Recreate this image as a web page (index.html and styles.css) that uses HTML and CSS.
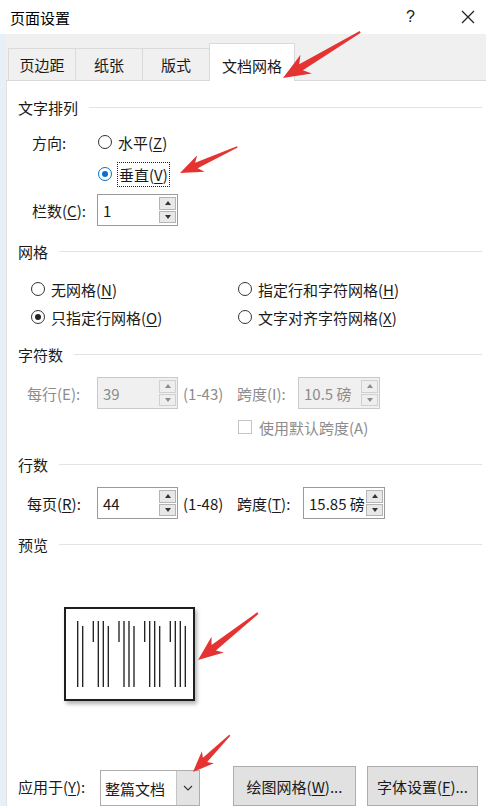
FILE: index.html
```html
<!DOCTYPE html>
<html lang="zh-CN">
<head>
  <meta charset="UTF-8" />
  <meta name="viewport" content="width=device-width, initial-scale=1.0"/>
  <title>页面设置</title>
  <link rel="stylesheet" href="styles.css">
</head>
<body>

  <div class="titlebar">
    <span class="title">页面设置</span>
    <span class="help">?</span>
    <svg class="close" width="14" height="14" viewBox="0 0 14 14">
      <path d="M1 1 L13 13 M13 1 L1 13" stroke="#222" stroke-width="1.3" fill="none"/>
    </svg>
  </div>

  <div class="window">
    <div class="edge"></div>
    <div class="dialog">

      <div class="tabs">
        <div class="tab">页边距</div>
        <div class="tab">纸张</div>
        <div class="tab">版式</div>
        <div class="tab active">文档网格</div>
      </div>

      <div class="panel">
        <div class="group-title"><span>文字排列</span></div>

        <div class="dir-row first">
          <span class="dir-label">方向:</span>
          <span class="radio"></span>
          <span>水平(<u>Z</u>)</span>
        </div>
        <div class="dir-row second">
          <span class="radio checked blue"></span>
          <span class="focus">垂直(<u>V</u>)</span>
        </div>

        <div class="cols-row">
          <span class="cols-label">栏数(<u>C</u>):</span>
          <div class="spin w81">
            <span class="spin-value">1</span>
            <div class="spin-btns">
              <span class="spin-btn up"></span>
              <span class="spin-btn down"></span>
            </div>
          </div>
        </div>

        <div class="group-title gap15"><span>网格</span></div>

        <div class="grid-row first">
          <div class="opt"><span class="radio"></span>无网格(<u>N</u>)</div>
          <div class="opt"><span class="radio"></span>指定行和字符网格(<u>H</u>)</div>
        </div>
        <div class="grid-row second">
          <div class="opt"><span class="radio checked"></span>只指定行网格(<u>O</u>)</div>
          <div class="opt"><span class="radio"></span>文字对齐字符网格(<u>X</u>)</div>
        </div>

        <div class="group-title gap15"><span>字符数</span></div>

        <div class="field-row disabled">
          <span class="field-label">每行(E):</span>
          <div class="spin w81">
            <span class="spin-value">39</span>
            <div class="spin-btns">
              <span class="spin-btn up"></span>
              <span class="spin-btn down"></span>
            </div>
          </div>
          <span class="range">(1-43)</span>
          <span class="pitch-label chars">跨度(I):</span>
          <div class="spin w82">
            <span class="spin-value">10.5 磅</span>
            <div class="spin-btns">
              <span class="spin-btn up"></span>
              <span class="spin-btn down"></span>
            </div>
          </div>
        </div>

        <div class="check-row">
          <span class="checkbox"></span>
          <span>使用默认跨度(A)</span>
        </div>

        <div class="group-title gap16"><span>行数</span></div>

        <div class="field-row">
          <span class="field-label">每页(<u>R</u>):</span>
          <div class="spin w81">
            <span class="spin-value">44</span>
            <div class="spin-btns">
              <span class="spin-btn up"></span>
              <span class="spin-btn down"></span>
            </div>
          </div>
          <span class="range">(1-48)</span>
          <span class="pitch-label lines">跨度(<u>T</u>):</span>
          <div class="spin w82">
            <span class="spin-value">15.85 磅</span>
            <div class="spin-btns">
              <span class="spin-btn up"></span>
              <span class="spin-btn down"></span>
            </div>
          </div>
        </div>

        <div class="group-title gap15"><span>预览</span></div>

        <div class="preview">
          <svg width="127" height="90" viewBox="0 0 127 90">
            <g stroke="#1a1a1a" stroke-width="1.3">
              <line x1="11.7" y1="12" x2="11.7" y2="78"/>
              <line x1="16.7" y1="17" x2="16.7" y2="78"/>

              <line x1="27.3" y1="12" x2="27.3" y2="33"/>
              <line x1="32.3" y1="12" x2="32.3" y2="78"/>
              <line x1="37.3" y1="12" x2="37.3" y2="78"/>
              <line x1="42.3" y1="17" x2="42.3" y2="78"/>

              <line x1="53" y1="12" x2="53" y2="33"/>
              <line x1="58" y1="12" x2="58" y2="78"/>
              <line x1="63" y1="12" x2="63" y2="78"/>
              <line x1="68" y1="17" x2="68" y2="78"/>

              <line x1="78.7" y1="12" x2="78.7" y2="33"/>
              <line x1="83.7" y1="12" x2="83.7" y2="78"/>
              <line x1="88.7" y1="12" x2="88.7" y2="78"/>
              <line x1="93.7" y1="17" x2="93.7" y2="78"/>

              <line x1="104.3" y1="12" x2="104.3" y2="33"/>
              <line x1="109.3" y1="12" x2="109.3" y2="78"/>
              <line x1="114.3" y1="12" x2="114.3" y2="78"/>
              <line x1="119.3" y1="17" x2="119.3" y2="78"/>
            </g>
          </svg>
        </div>

        <div class="bottom-row">
          <span class="apply-label">应用于(<u>Y</u>):</span>
          <div class="combo">
            <span class="combo-value">整篇文档</span>
            <span class="combo-drop">
              <svg width="10" height="6" viewBox="0 0 10 6">
                <path d="M1 1 L5 5 L9 1" stroke="#333" stroke-width="1.1" fill="none"/>
              </svg>
            </span>
          </div>
          <button class="btn draw">绘图网格(<u>W</u>)...</button>
          <button class="btn font">字体设置(<u>F</u>)...</button>
        </div>
      </div>
    </div>
  </div>

  <!-- red annotation arrows drawn over the dialog -->
  <svg class="marks" width="486" height="806" viewBox="0 0 486 806">
    <g fill="#e53331">
      <polygon transform="translate(283,78) rotate(-30.9)" points="0,0 27,-11 21,-3.5 90,-1 90,1 21,3.5 27,11"/>
      <polygon transform="translate(180,173) rotate(-24.5)" points="0,0 23,-9 18,-3 63,-0.8 63,0.8 18,3 23,9"/>
      <polygon transform="translate(198,660) rotate(-38.1)" points="0,0 25,-10 20,-3.5 76,-1 76,1 20,3.5 25,10"/>
      <polygon transform="translate(193,772) rotate(-45)" points="0,0 21,-8.5 17,-3 52,-0.8 52,0.8 17,3 21,8.5"/>
    </g>
  </svg>

</body>
</html>
```

FILE: styles.css
```css
body {
  font-family: "Noto Sans CJK SC", "Noto Sans", sans-serif;
  font-size: 15px;
  color: #1a1a1a;
  background: #fff;
  margin: 0;
  width: 486px;
  height: 806px;
  overflow: hidden;
  position: relative;
}

u {
  text-decoration-thickness: 1px;
  text-underline-offset: 2px;
}

.titlebar {
  height: 34px;
  display: flex;
  align-items: center;
  padding-left: 10px;
  background: #fff;
}

.title {
  font-size: 15px;
  color: #000;
  flex: 1;
}

.help {
  font-family: "Liberation Sans", sans-serif;
  font-size: 16px;
  margin-right: 46px;
}

.close {
  margin-right: 11px;
}

.window {
  display: flex;
  height: 772px;
}

.edge {
  width: 6px;
  background: #e7eff7;
}

.dialog {
  flex: 1;
  display: flex;
  flex-direction: column;
}

.tabs {
  height: 47px;
  background: #f0f0f0;
  border-bottom: 1px solid #d9d9d9;
  display: flex;
  align-items: flex-end;
  padding-left: 2px;
}

.tab {
  width: 68px;
  height: 32px;
  box-sizing: border-box;
  border: 1px solid #dadada;
  border-bottom: none;
  margin-right: -1px;
  display: flex;
  align-items: center;
  justify-content: center;
  background: #f0f0f0;
}

.tab.active {
  width: 86px;
  height: 38px;
  background: #fff;
  padding-top: 5px;
  margin-bottom: -1px;
  position: relative;
}

.panel {
  flex: 1;
  border-left: 1px solid #e2e2e2;
  padding: 16px 4px 0 11px;
  display: flex;
  flex-direction: column;
}

.group-title {
  height: 20px;
  display: flex;
  align-items: center;
}

.group-title::after {
  content: "";
  flex: 1;
  height: 1px;
  background: #e3e3e3;
  margin-left: 11px;
}

.gap15 { margin-top: 15px; }
.gap16 { margin-top: 16px; }

.radio {
  display: inline-block;
  width: 12px;
  height: 12px;
  border: 1px solid #333;
  border-radius: 50%;
  margin-right: 6px;
  position: relative;
  flex-shrink: 0;
}

.radio.checked::after {
  content: "";
  position: absolute;
  left: 3px;
  top: 3px;
  width: 6px;
  height: 6px;
  border-radius: 50%;
  background: #222;
}

.radio.blue {
  border-color: #0b6fc9;
}

.radio.blue::after {
  background: #0b6fc9;
}

.dir-row {
  display: flex;
  align-items: center;
}

.dir-row.first {
  height: 24px;
  margin-top: 13px;
  padding-left: 14px;
}

.dir-row.second {
  height: 26px;
  margin-top: 7px;
  padding-left: 80px;
}

.dir-label {
  width: 66px;
}

.focus {
  border: 1px dotted #222;
  padding: 1px 1px;
  margin-left: -1px;
}

.cols-row {
  display: flex;
  align-items: center;
  margin-top: 7px;
  padding-left: 14px;
}

.cols-label {
  width: 65px;
}

.spin {
  height: 32px;
  box-sizing: border-box;
  border: 1px solid #9a9a9a;
  background: #fff;
  display: flex;
  align-items: center;
}

.w81 { width: 81px; }
.w82 { width: 82px; }

.spin-value {
  flex: 1;
  padding-left: 5px;
  white-space: nowrap;
  overflow: hidden;
}

.spin-btns {
  width: 18px;
  height: 100%;
  box-sizing: border-box;
  padding: 2px 1px 2px 0;
  display: flex;
  flex-direction: column;
  gap: 1px;
}

.spin-btn {
  flex: 1;
  background: #e8e8e8;
  border: 1px solid #b4b4b4;
  display: flex;
  align-items: center;
  justify-content: center;
}

.spin-btn::after {
  content: "";
  border-left: 3.5px solid transparent;
  border-right: 3.5px solid transparent;
}

.spin-btn.up::after {
  border-bottom: 4px solid #333;
}

.spin-btn.down::after {
  border-top: 4px solid #333;
}

.grid-row {
  display: flex;
  align-items: center;
  height: 24px;
  padding-left: 13px;
}

.grid-row.first { margin-top: 16px; }
.grid-row.second { margin-top: 4px; }

.opt {
  display: flex;
  align-items: center;
}

.opt:first-child {
  width: 207px;
}

.field-row {
  display: flex;
  align-items: center;
  margin-top: 13px;
  padding-left: 9px;
}

.field-label {
  width: 70px;
}

.range {
  width: 54px;
  margin-left: 5px;
}

.pitch-label.chars { width: 61px; }
.pitch-label.lines { width: 66px; }

.disabled {
  color: #8c8c8c;
}

.disabled .spin {
  background: #f0f0f0;
  border-color: #cacaca;
}

.disabled .spin-btn {
  background: #eeeeee;
  border-color: #d0d0d0;
}

.disabled .spin-btn.up::after { border-bottom-color: #8c8c8c; }
.disabled .spin-btn.down::after { border-top-color: #8c8c8c; }

.check-row {
  display: flex;
  align-items: center;
  height: 22px;
  margin-top: 7px;
  padding-left: 220px;
  color: #8c8c8c;
}

.checkbox {
  width: 12px;
  height: 12px;
  border: 1px solid #c4c4c4;
  margin-right: 7px;
}

.preview {
  width: 127px;
  height: 90px;
  border: 2px solid #1e1e1e;
  margin: 53px 0 0 46px;
  box-shadow: 2px 3px 4px rgba(0, 0, 0, 0.3);
  background: #fff;
}

.preview svg {
  display: block;
}

.bottom-row {
  display: flex;
  align-items: center;
  height: 40px;
  margin-top: 65px;
}

.apply-label {
  width: 82px;
}

.combo {
  width: 100px;
  height: 36px;
  box-sizing: border-box;
  border: 1px solid #adadad;
  display: flex;
  margin-top: 4px;
}

.combo-value {
  flex: 1;
  padding-left: 4px;
  display: flex;
  align-items: center;
}

.combo-drop {
  width: 22px;
  background: #e3e3e3;
  border-left: 1px solid #c4c4c4;
  display: flex;
  align-items: center;
  justify-content: center;
}

.btn {
  font-family: inherit;
  font-size: 15px;
  color: #1a1a1a;
  height: 40px;
  background: #e1e1e1;
  border: 1px solid #adadad;
  padding: 0;
}

.btn.draw {
  width: 123px;
  margin-left: 33px;
}

.btn.font {
  width: 111px;
  margin-left: 11px;
}

.marks {
  position: absolute;
  left: 0;
  top: 0;
  pointer-events: none;
}
```
